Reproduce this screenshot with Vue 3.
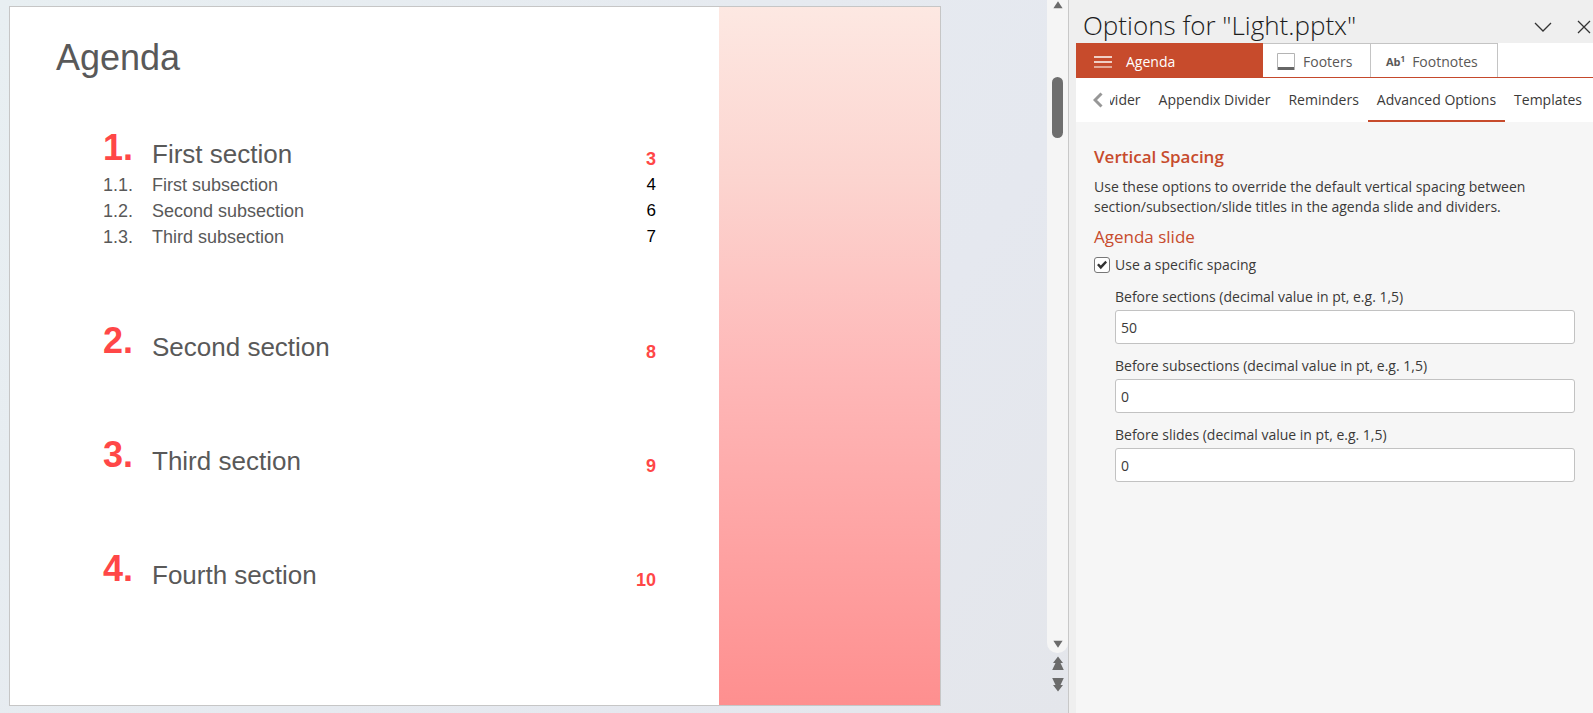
<template>
  <div class="app">
    <main class="workspace">
      <article class="slide">
        <div class="slide-content">
          <h1 class="slide-title">Agenda</h1>
          <section v-for="section in sections" :key="section.number" class="section">
            <div class="section-row">
              <span class="section-number">{{ section.number }}</span>
              <span class="section-name">{{ section.name }}</span>
              <span class="section-page">{{ section.page }}</span>
            </div>
            <ul v-if="section.children.length" class="subsections">
              <li v-for="child in section.children" :key="child.number" class="subsection-row">
                <span class="subsection-number">{{ child.number }}</span>
                <span class="subsection-name">{{ child.name }}</span>
                <span class="subsection-page">{{ child.page }}</span>
              </li>
            </ul>
          </section>
        </div>
        <div class="slide-band"></div>
      </article>
    </main>

    <div class="scroll-column">
      <div class="scrollbar">
        <button class="scroll-button" type="button" aria-label="Scroll up">
          <svg width="12" height="10" viewBox="0 0 12 10"><path d="M6 1.2 10.6 8.2H1.4Z" /></svg>
        </button>
        <div class="scroll-track">
          <div class="scroll-thumb"></div>
        </div>
        <button class="scroll-button" type="button" aria-label="Scroll down">
          <svg width="12" height="10" viewBox="0 0 12 10"><path d="M6 8.8 10.6 1.8H1.4Z" /></svg>
        </button>
      </div>
      <button class="slide-button" type="button" aria-label="Previous slide">
        <svg width="14" height="17" viewBox="0 0 14 17"><path d="M7 1.5 12 8H9.5L12.8 15H1.2L4.5 8H2Z" /></svg>
      </button>
      <button class="slide-button" type="button" aria-label="Next slide">
        <svg width="14" height="17" viewBox="0 0 14 17"><path d="M7 15.5 12 9H9.5L12.8 2H1.2L4.5 9H2Z" /></svg>
      </button>
    </div>

    <aside class="pane">
      <header class="pane-header">
        <h2 class="pane-title">Options for "Light.pptx"</h2>
        <button class="icon-button" type="button" aria-label="Pane options">
          <svg width="18" height="12" viewBox="0 0 18 12"><path d="M1 2 9 10 17 2" /></svg>
        </button>
        <button class="icon-button" type="button" aria-label="Close">
          <svg width="14" height="14" viewBox="0 0 14 14"><path d="M1 1 13 13M13 1 1 13" /></svg>
        </button>
      </header>

      <nav class="tabs">
        <button class="tab tab-agenda" type="button">
          <svg width="18" height="12" viewBox="0 0 18 12">
            <path d="M0 1H18" stroke="#f0d0c6" stroke-width="2" />
            <path d="M0 6H18" stroke="#f0d0c6" stroke-width="2" />
            <path d="M0 11H18" stroke="#e3a896" stroke-width="2" />
          </svg>
          Agenda
        </button>
        <button class="tab tab-footers" type="button">
          <svg width="18" height="18" viewBox="0 0 18 18">
            <path d="M0.5 17V0.5H17.5V17" fill="#fff" stroke="#b4b4b4" />
            <rect x="1" y="14" width="16" height="3" fill="#666" />
          </svg>
          Footers
        </button>
        <button class="tab tab-footnotes" type="button">
          <span class="footnote-icon" aria-hidden="true">Ab<sup>1</sup></span>
          Footnotes
        </button>
      </nav>

      <nav class="subtabs">
        <button class="subtabs-back" type="button" aria-label="Scroll tabs left">
          <svg width="10" height="16" viewBox="0 0 10 16"><path d="M8.5 1.5 2 8 8.5 14.5" /></svg>
        </button>
        <div class="subtabs-strip">
          <button
            v-for="tab in subtabs"
            :key="tab"
            type="button"
            class="subtab"
            :class="{ active: tab === activeSubtab }"
            @click="activeSubtab = tab"
          >{{ tab }}</button>
        </div>
      </nav>

      <form class="pane-body" @submit.prevent>
        <h3 class="group-title">Vertical Spacing</h3>
        <p class="description">
          Use these options to override the default vertical spacing between
          section/subsection/slide titles in the agenda slide and dividers.
        </p>
        <h4 class="group-subtitle">Agenda slide</h4>
        <label class="check">
          <input v-model="useSpacing" type="checkbox" />
          Use a specific spacing
        </label>
        <div v-for="field in fields" :key="field.id" class="field">
          <label :for="field.id">{{ field.label }}</label>
          <input :id="field.id" v-model="field.value" type="text" :disabled="!useSpacing" />
        </div>
      </form>
    </aside>
  </div>
</template>

<script setup>
import { reactive, ref } from 'vue'

const sections = [
  {
    number: '1.',
    name: 'First section',
    page: 3,
    children: [
      { number: '1.1.', name: 'First subsection', page: 4 },
      { number: '1.2.', name: 'Second subsection', page: 6 },
      { number: '1.3.', name: 'Third subsection', page: 7 }
    ]
  },
  { number: '2.', name: 'Second section', page: 8, children: [] },
  { number: '3.', name: 'Third section', page: 9, children: [] },
  { number: '4.', name: 'Fourth section', page: 10, children: [] }
]

const subtabs = ['Divider', 'Appendix Divider', 'Reminders', 'Advanced Options', 'Templates']
const activeSubtab = ref('Advanced Options')

const useSpacing = ref(true)
const fields = reactive([
  { id: 'before-sections', label: 'Before sections (decimal value in pt, e.g. 1,5)', value: '50' },
  { id: 'before-subsections', label: 'Before subsections (decimal value in pt, e.g. 1,5)', value: '0' },
  { id: 'before-slides', label: 'Before slides (decimal value in pt, e.g. 1,5)', value: '0' }
])
</script>

<style>
body {
  margin: 0;
}
</style>

<style scoped>
.app {
  display: flex;
  min-height: 100vh;
  background: linear-gradient(125deg, #e8eff2 0%, #e5e8ef 55%, #e4e6eb 75%, #e3e6ee 100%);
  color: #3b3a39;
  font-family: "Open Sans", "Noto Sans", sans-serif;
  font-size: 14px;
  line-height: 20px;
}
button {
  padding: 0;
  border: 0;
  background: none;
  color: inherit;
  font: inherit;
  cursor: pointer;
}
h1, h2, h3, h4, p, ul {
  margin: 0;
  padding: 0;
}
svg {
  display: block;
  flex: none;
}

/* Slide */
.workspace {
  display: flex;
  flex: 1;
  min-width: 0;
  padding: 6px 106px 7px 9px;
}
.slide {
  display: flex;
  flex: 1;
  border: 1px solid #c6c6c6;
  background: #fff;
  color: #595959;
  font-family: "Liberation Sans", Arial, sans-serif;
}
.slide-content {
  flex: 1;
  padding: 30px 63px 0 46px;
}
.slide-band {
  flex: 0 0 221px;
  background: linear-gradient(#fde8e2, #fcd4cf 25%, #feb8b8 52%, #fe8f8f);
}
.slide-title {
  margin-bottom: 48px;
  font-size: 36px;
  font-weight: 400;
  line-height: 42px;
}
.section {
  padding-left: 47px;
  margin-bottom: 72px;
}
.section-row {
  display: flex;
  align-items: flex-end;
}
.section-number {
  width: 49px;
  color: #ff4747;
  font-size: 36px;
  font-weight: 700;
  line-height: 42px;
}
.section-name {
  flex: 1;
  font-size: 26px;
  line-height: 30px;
}
.section-page {
  color: #ff4747;
  font-size: 18px;
  font-weight: 700;
  line-height: 20px;
}
.subsections {
  margin: 3px 0 -2px;
  list-style: none;
}
.subsection-row {
  display: flex;
  font-size: 18px;
  line-height: 26px;
}
.subsection-number {
  width: 49px;
}
.subsection-name {
  flex: 1;
}
.subsection-page {
  color: #000;
  font-size: 17px;
}

/* Scrollbar */
.scroll-column {
  display: flex;
  flex: none;
  flex-direction: column;
  align-items: center;
  width: 21px;
  padding-bottom: 16px;
  fill: #6b6b6b;
}
.scrollbar {
  display: flex;
  flex: 1;
  flex-direction: column;
  align-items: center;
  width: 100%;
  margin-bottom: 2px;
  padding-bottom: 4px;
  border-radius: 0 0 10px 10px;
  box-sizing: border-box;
  background: #f5f5f5;
}
.scroll-track {
  flex: 1;
  padding-top: 67px;
}
.scroll-thumb {
  width: 11px;
  height: 61px;
  border-radius: 6px;
  background: #6e6e6e;
}
.slide-button {
  margin-bottom: 4px;
}

/* Options pane */
.pane {
  flex: none;
  width: 33%;
  max-width: 525px;
  padding-left: 7px;
  border-left: 1px solid #c8c8c8;
  box-sizing: border-box;
  background: #efefef;
  display: flex;
  flex-direction: column;
}
.pane-header {
  display: flex;
  align-items: center;
  gap: 25px;
  height: 43px;
  padding: 10px 2px 0 7px;
  box-sizing: border-box;
}
.pane-title {
  flex: 1;
  margin-top: -4px;
  font-size: 26px;
  font-weight: 300;
  line-height: 34px;
  color: #1c1c1c;
}
.icon-button svg {
  fill: none;
  stroke: #333;
  stroke-width: 1.3;
}
.tabs {
  display: flex;
  height: 35px;
  border-bottom: 1px solid #c5492c;
  box-sizing: border-box;
  background: #fff;
}
.tab {
  display: flex;
  align-items: center;
  padding-top: 2px;
  border-top: 1px solid #c4c4c4;
  border-right: 1px solid #c4c4c4;
  box-sizing: border-box;
  color: #5a5857;
}
.tab-agenda {
  gap: 14px;
  width: 187px;
  padding-left: 18px;
  border-color: #c74b2c;
  background: #c74b2c;
  color: #fff;
}
.tab-footers {
  gap: 8px;
  width: 108px;
  padding-left: 14px;
}
.tab-footnotes {
  gap: 7px;
  width: 127px;
  padding-left: 15px;
}
.footnote-icon {
  display: flex;
  font-size: 11px;
  font-weight: 700;
}
.footnote-icon sup {
  font-size: 8px;
  line-height: 14px;
}
.subtabs {
  display: flex;
  height: 44px;
  padding: 0 2px 0 17px;
  background: #fff;
}
.subtabs-back svg {
  fill: none;
  stroke: #979797;
  stroke-width: 3;
}
.subtabs-strip {
  display: flex;
  flex: 1;
  justify-content: flex-end;
  min-width: 0;
  margin-left: 7px;
  overflow: hidden;
}
.subtab {
  flex: none;
  padding: 0 9px;
  border-top: 2px solid transparent;
  border-bottom: 2px solid transparent;
  white-space: nowrap;
}
.subtab.active {
  border-bottom-color: #c74b2c;
}
.pane-body {
  flex: 1;
  padding: 24px 18px 24px;
  background: #f6f6f6;
}
.group-title {
  margin-bottom: 9px;
  color: #c74b2c;
  font-size: 17px;
  font-weight: 600;
  line-height: 22px;
}
.group-subtitle {
  margin: 8px 0 6px;
  color: #c74b2c;
  font-size: 17px;
  font-weight: 400;
  line-height: 24px;
}
.check {
  display: flex;
  align-items: center;
  gap: 5px;
}
.check input {
  display: grid;
  place-items: center;
  width: 16px;
  height: 16px;
  margin: 0;
  border: 1px solid #777;
  border-radius: 3px;
  box-sizing: border-box;
  appearance: none;
  background: #fff;
}
.check input:checked::before {
  content: "";
  width: 10px;
  height: 10px;
  background: #333;
  clip-path: polygon(0 50%, 18% 36%, 38% 56%, 84% 8%, 100% 24%, 38% 92%);
}
.field {
  display: flex;
  flex-direction: column;
  gap: 3px;
  margin: 12px 0 12px 21px;
}
.field input {
  height: 34px;
  padding: 0 5px;
  border: 1px solid #c2c2c2;
  border-radius: 3px;
  box-sizing: border-box;
  background: #fff;
  color: inherit;
  font: inherit;
}
</style>
